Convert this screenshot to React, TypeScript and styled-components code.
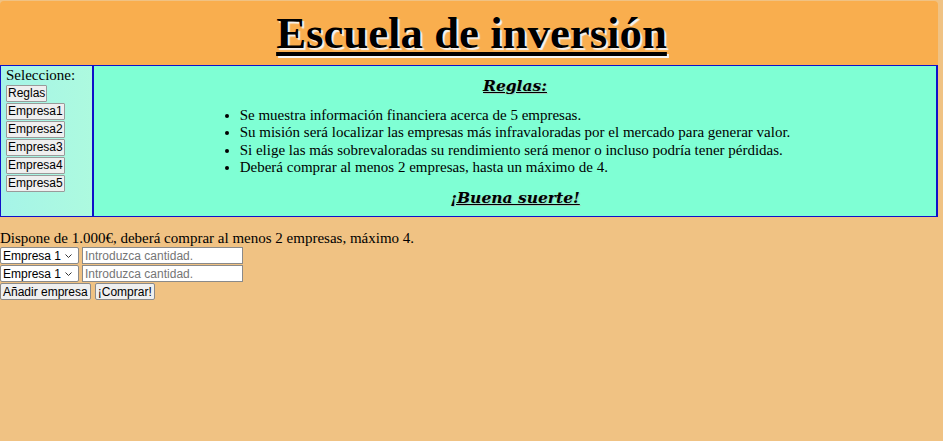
import React from "react";
import styled, { createGlobalStyle } from "styled-components";

const Global = createGlobalStyle`
  html, body { margin: 0; padding: 0; }
  body {
    background: #f0c283;
    font-family: "Liberation Serif", "Times New Roman", serif;
    font-size: 15px;
    color: #000;
  }
`;

const Page = styled.div`
  width: 938px;
`;

const Header = styled.header`
  margin-top: 1px;
  height: 64px;
  background: #f9ae4e;
  border-radius: 4px 4px 0 0;
  display: flex;
  align-items: center;
  justify-content: center;
`;

const Title = styled.h1`
  margin: 0 0 0 5px;
  font-family: "Liberation Serif", "Times New Roman", serif;
  font-size: 44.8px;
  font-weight: bold;
  text-decoration: underline;
  text-decoration-thickness: 4px;
  text-underline-offset: 4px;
  text-shadow: 2px 2px 1px #f4f4f4;
`;

const Board = styled.div`
  display: grid;
  grid-template-columns: 93px 1fr;
  border: 1px solid #1010c8;
  height: 150px;
`;

const Sidebar = styled.nav`
  background: linear-gradient(to right, #a6f4e8, #adfadf);
  border-right: 2px solid #1010c8;
  padding: 1px 0 0 5px;
  display: flex;
  flex-direction: column;
  align-items: flex-start;
`;

const Label = styled.span`
  line-height: 17px;
`;

const MenuButton = styled.button`
  font-family: "Liberation Sans", Arial, sans-serif;
  font-size: 12px;
  line-height: 13px;
  padding: 1px 1px;
  margin: 1px 0 0 0;
  background: #efefef;
  border: 1px solid #9a9a9a;
  border-radius: 1px;
  color: #000;
`;

const Main = styled.section`
  background: #7fffd4;
  border-right: 1px solid #1010c8;
  display: flex;
  flex-direction: column;
  align-items: center;
  padding-top: 9px;
`;

const Heading = styled.h3`
  margin: 0;
  font-family: "DejaVu Serif", "Liberation Serif", serif;
  font-size: 15.5px;
  font-style: italic;
  font-weight: bold;
  text-decoration: underline;
  text-shadow: 1px 1px 1px #9fcfbf;
  line-height: 22px;
`;

const Rules = styled.ul`
  margin: 10px 0 11px 0;
  padding-left: 0;
  line-height: 17.3px;
`;

const Purchase = styled.form`
  margin-top: 13px;
  display: flex;
  flex-direction: column;
  align-items: flex-start;
`;

const Intro = styled.div`
  line-height: 17px;
`;

const Row = styled.div`
  display: flex;
  align-items: center;
  gap: 3px;
  margin-bottom: 1px;
`;

const SelectWrap = styled.div`
  position: relative;
  display: flex;
`;

const Select = styled.select`
  appearance: none;
  font-family: "Liberation Sans", Arial, sans-serif;
  font-size: 12px;
  height: 17px;
  width: 79px;
  padding: 0 0 0 2px;
  border: 1px solid #8a8a8a;
  border-radius: 2px;
  background: #fff;
  color: #000;
`;

const Chevron = styled.svg`
  position: absolute;
  right: 7px;
  top: 7px;
  pointer-events: none;
`;

const Amount = styled.input`
  font-family: "Liberation Sans", Arial, sans-serif;
  font-size: 12px;
  height: 17px;
  width: 161px;
  box-sizing: border-box;
  padding: 0 2px;
  border: 1px solid #8a8a8a;
  &::placeholder { color: #757575; }
`;

const ActionButton = styled.button`
  font-family: "Liberation Sans", Arial, sans-serif;
  font-size: 12px;
  height: 17px;
  padding: 0 2px;
  margin: 0;
  background: #efefef;
  border: 1px solid #8a8a8a;
  border-radius: 2px;
  color: #000;
`;

const Actions = styled.div`
  display: flex;
  gap: 4px;
`;

const companies = ["Empresa1", "Empresa2", "Empresa3", "Empresa4", "Empresa5"];

function CompanySelect() {
  return (
    <SelectWrap>
      <Select defaultValue="1">
        <option value="1">Empresa 1</option>
        <option value="2">Empresa 2</option>
        <option value="3">Empresa 3</option>
        <option value="4">Empresa 4</option>
        <option value="5">Empresa 5</option>
      </Select>
      <Chevron width="7" height="4" viewBox="0 0 7 4">
        <path d="M0.5 0.5 L3.5 3.5 L6.5 0.5" fill="none" stroke="#333" strokeWidth="1" />
      </Chevron>
    </SelectWrap>
  );
}

export default function App() {
  return (
    <Page>
      <Global />
      <Header>
        <Title>Escuela de inversión</Title>
      </Header>
      <Board>
        <Sidebar>
          <Label>Seleccione:</Label>
          <MenuButton>Reglas</MenuButton>
          {companies.map((c) => (
            <MenuButton key={c}>{c}</MenuButton>
          ))}
        </Sidebar>
        <Main>
          <Heading>Reglas:</Heading>
          <Rules>
            <li>Se muestra información financiera acerca de 5 empresas.</li>
            <li>Su misión será localizar las empresas más infravaloradas por el mercado para generar valor.</li>
            <li>Si elige las más sobrevaloradas su rendimiento será menor o incluso podría tener pérdidas.</li>
            <li>Deberá comprar al menos 2 empresas, hasta un máximo de 4.</li>
          </Rules>
          <Heading>¡Buena suerte!</Heading>
        </Main>
      </Board>
      <Purchase onSubmit={(e) => e.preventDefault()}>
        <Intro>Dispone de 1.000€, deberá comprar al menos 2 empresas, máximo 4.</Intro>
        <Row>
          <CompanySelect />
          <Amount placeholder="Introduzca cantidad." />
        </Row>
        <Row>
          <CompanySelect />
          <Amount placeholder="Introduzca cantidad." />
        </Row>
        <Actions>
          <ActionButton type="button">Añadir empresa</ActionButton>
          <ActionButton type="submit">¡Comprar!</ActionButton>
        </Actions>
      </Purchase>
    </Page>
  );
}
